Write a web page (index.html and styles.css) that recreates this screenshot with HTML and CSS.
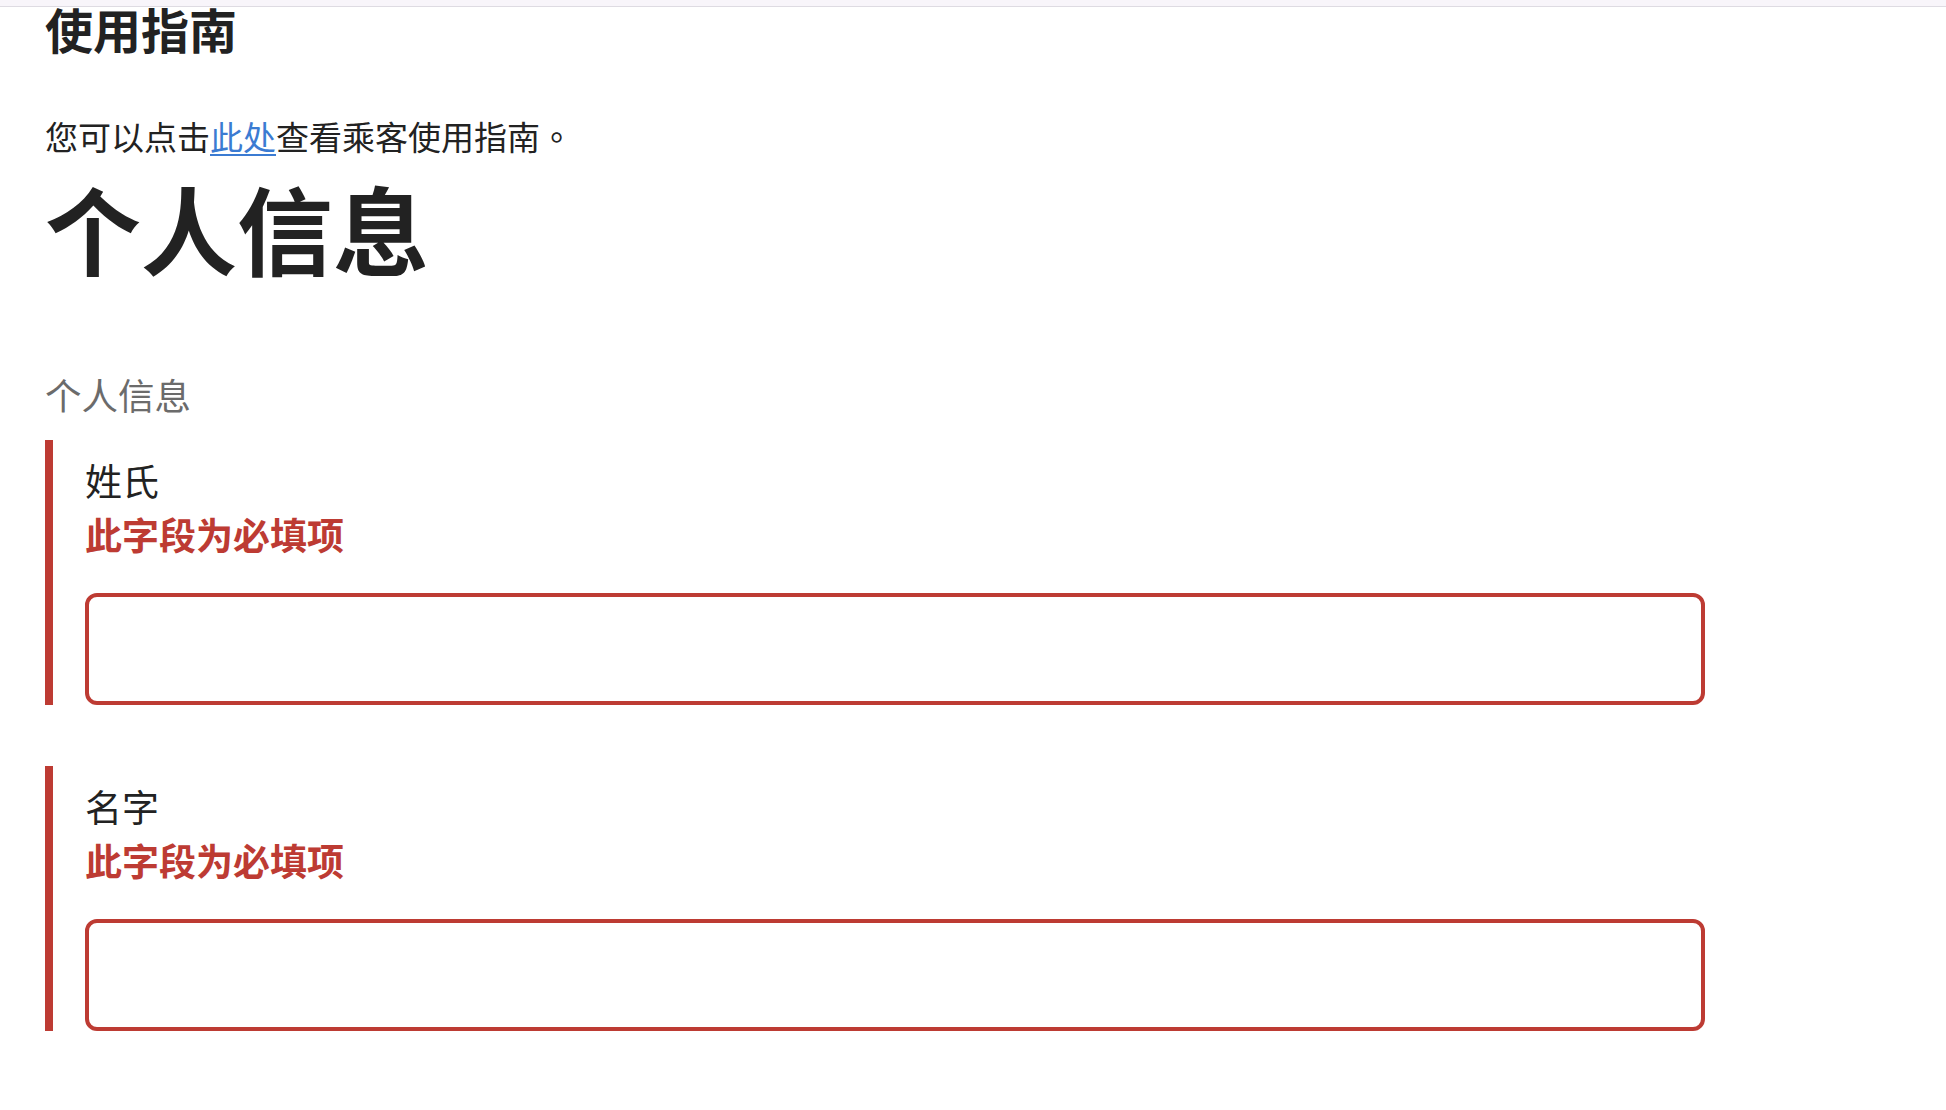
FILE: index.html
```html
<!DOCTYPE html>
<html lang="zh-CN">
<head>
    <meta charset="UTF-8">
    <meta name="viewport" content="width=device-width, initial-scale=1.0">
    <title>个人信息</title>
    <link rel="stylesheet" href="styles.css">
</head>
<body>
    <div class="top-strip"></div>
    <main class="page">
        <h2 class="guide-title">使用指南</h2>
        <p class="guide-text">您可以点击<a href="#">此处</a>查看乘客使用指南<span class="punct" lang="zh-TW">。</span></p>

        <h1 class="page-title">个人信息</h1>

        <form class="details-form">
            <fieldset class="fieldset">
                <legend class="legend">个人信息</legend>

                <div class="form-group form-group-error">
                    <label class="label" for="last-name">姓氏</label>
                    <p class="error-message">此字段为必填项</p>
                    <input class="input input-error" type="text" id="last-name" name="last-name">
                </div>

                <div class="form-group form-group-error">
                    <label class="label" for="first-name">名字</label>
                    <p class="error-message">此字段为必填项</p>
                    <input class="input input-error" type="text" id="first-name" name="first-name">
                </div>
            </fieldset>
        </form>
    </main>
</body>
</html>
```

FILE: styles.css
```css
body {
    margin: 0;
    padding: 0;
    background-color: #ffffff;
    color: #222222;
    font-family: "Noto Sans CJK SC", "Noto Sans", sans-serif;
}
.top-strip {
    position: fixed;
    top: 0;
    left: 0;
    right: 0;
    height: 6px;
    background-color: #f8f5fa;
    border-bottom: 1px solid #dedbe2;
    z-index: 10;
}
.page {
    padding: 4px 45px 40px 45px;
}
.guide-title {
    margin: 0;
    font-size: 48px;
    line-height: 48px;
    font-weight: 700;
}
.guide-text {
    margin: 60px 0 0 0;
    font-size: 33px;
    line-height: 48px;
}
.guide-text a {
    color: #3b7bd2;
    text-decoration: underline;
    text-underline-offset: 4px;
    text-decoration-thickness: 2px;
}
.punct {
    font-family: "Noto Sans CJK TC", sans-serif;
}
.page-title {
    margin: 11px 0 0 0;
    font-size: 96px;
    line-height: 112px;
    font-weight: 700;
}
.details-form {
    margin-top: 88px;
}
.fieldset {
    margin: 0;
    padding: 0;
    border: none;
    min-width: 0;
}
.legend {
    padding: 0;
    margin-bottom: 21px;
    font-size: 36.5px;
    line-height: 48px;
    color: #6b6b6b;
}
.form-group {
    display: flex;
    flex-direction: column;
    align-items: flex-start;
    margin-bottom: 61px;
}
.form-group-error {
    border-left: 8px solid #bd3b33;
    padding: 16px 0 0 32px;
}
.label {
    font-size: 37px;
    line-height: 48px;
    color: #222222;
}
.error-message {
    margin: 6px 0 35px 0;
    font-size: 37px;
    line-height: 48px;
    font-weight: 700;
    color: #bd3b33;
}
.input {
    box-sizing: border-box;
    width: 1620px;
    height: 112px;
    padding: 0 20px;
    font-size: 36px;
    font-family: inherit;
    border: 4px solid #222222;
    border-radius: 12px;
    background-color: #ffffff;
    outline: none;
}
.input-error {
    border-color: #bd3b33;
}
```
